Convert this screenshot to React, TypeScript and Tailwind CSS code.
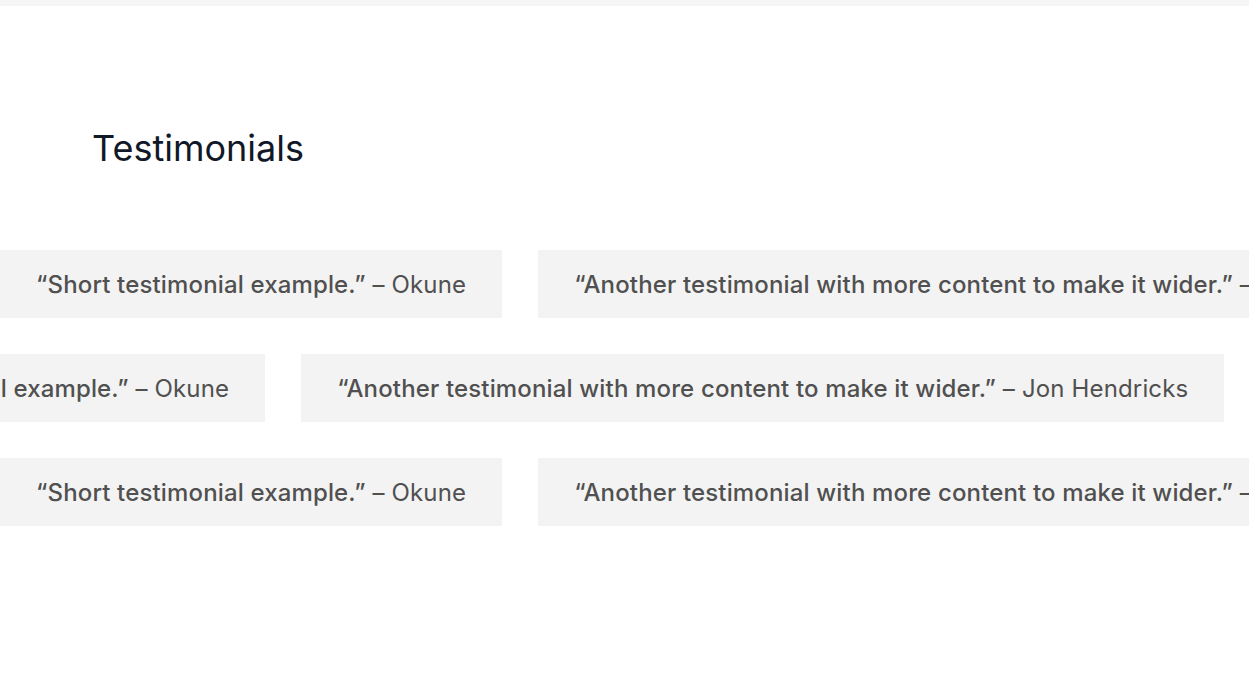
const testimonials = [
  { quote: "“Short testimonial example.”", author: "Okune" },
  {
    quote: "“Another testimonial with more content to make it wider.”",
    author: "Jon Hendricks",
  },
];

const rows = [
  { offset: "translate-x-0" },
  { offset: "-translate-x-[237px]" },
  { offset: "translate-x-0" },
];

function Card({ quote, author }: { quote: string; author: string }) {
  return (
    <div className="shrink-0 bg-[#f3f3f3] px-9 pt-[19px] pb-[17px] text-[24px] leading-8 tracking-[0.15px] whitespace-nowrap text-[#505050]">
      <span className="font-medium">{quote}</span>
      <span> – {author}</span>
    </div>
  );
}

export default function App() {
  return (
    <div
      className="min-h-screen bg-white overflow-hidden"
      style={{ fontFamily: "Inter, 'Noto Sans', sans-serif" }}
    >
      <div className="h-[6px] bg-[#f5f5f5]" />
      <section className="pt-[118px]">
        <h2 className="pl-[92px] text-[36px] leading-[48px] font-normal text-[#111827]">
          Testimonials
        </h2>
        <div className="mt-[78px] flex flex-col gap-9">
          {rows.map((row, i) => (
            <div key={i} className={`flex gap-9 ${row.offset}`}>
              {[...testimonials, ...testimonials].map((t, j) => (
                <Card key={j} quote={t.quote} author={t.author} />
              ))}
            </div>
          ))}
        </div>
      </section>
    </div>
  );
}
